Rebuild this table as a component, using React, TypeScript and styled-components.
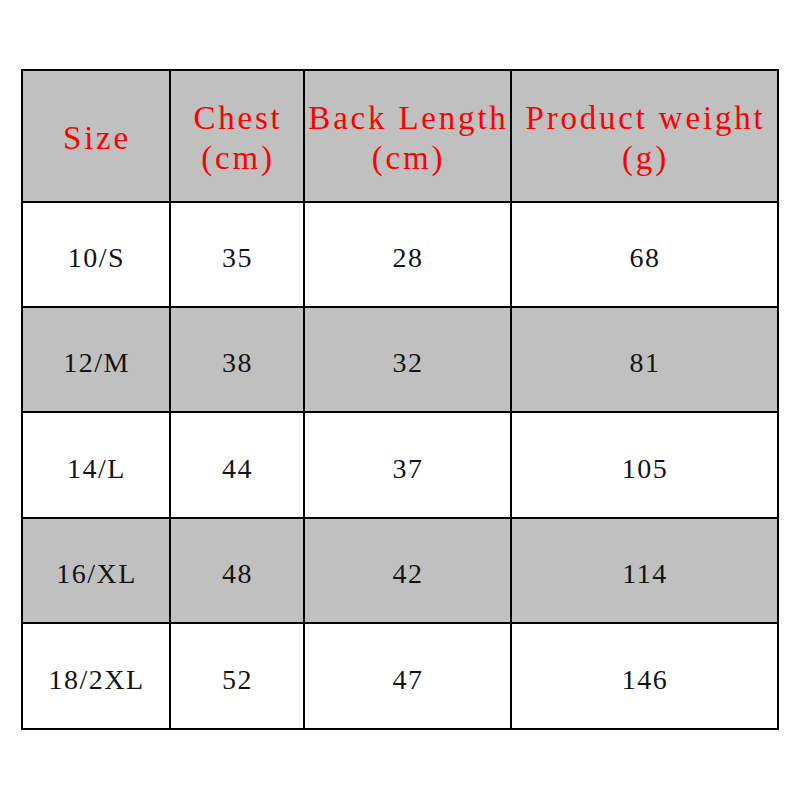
import styled, { createGlobalStyle } from 'styled-components';

const GlobalStyle = createGlobalStyle`
  html, body {
    margin: 0;
    padding: 0;
    background: #ffffff;
  }
`;

const Page = styled.div`
  width: 800px;
  height: 800px;
  padding: 69px 0 0 21px;
  box-sizing: border-box;
`;

const Grid = styled.div`
  display: inline-grid;
  grid-template-columns: 146px 132px 205px 265px;
  grid-template-rows: 130px 103px 103px 104px 103px 104px;
  gap: 2px;
  padding: 2px;
  background: #000000;
`;

const Cell = styled.div<{ $gray?: boolean; $head?: boolean }>`
  display: flex;
  align-items: center;
  justify-content: center;
  text-align: center;
  background: ${(p) => (p.$gray ? '#c0c0c0' : '#ffffff')};
  color: ${(p) => (p.$head ? '#ff0000' : '#141414')};
  font-family: 'Liberation Serif', 'Times New Roman', serif;
  font-size: ${(p) => (p.$head ? '33px' : '28px')};
  letter-spacing: ${(p) => (p.$head ? '2.8px' : '1.5px')};
  line-height: ${(p) => (p.$head ? '40px' : '1')};
  white-space: pre-line;
  padding-top: ${(p) => (p.$head ? '4px' : '7px')};
  padding-left: ${(p) => (p.$head ? '2px' : '1px')};
`;

const headers = ['Size', 'Chest\n(cm)', 'Back Length\n(cm)', 'Product weight\n(g)'];

const rows = [
  ['10/S', '35', '28', '68'],
  ['12/M', '38', '32', '81'],
  ['14/L', '44', '37', '105'],
  ['16/XL', '48', '42', '114'],
  ['18/2XL', '52', '47', '146'],
];

export default function App() {
  return (
    <>
      <GlobalStyle />
      <Page>
        <Grid>
          {headers.map((h) => (
            <Cell key={h} $gray $head>
              {h}
            </Cell>
          ))}
          {rows.map((row, i) =>
            row.map((v, j) => (
              <Cell key={`${i}-${j}`} $gray={i % 2 === 1}>
                {v}
              </Cell>
            ))
          )}
        </Grid>
      </Page>
    </>
  );
}
